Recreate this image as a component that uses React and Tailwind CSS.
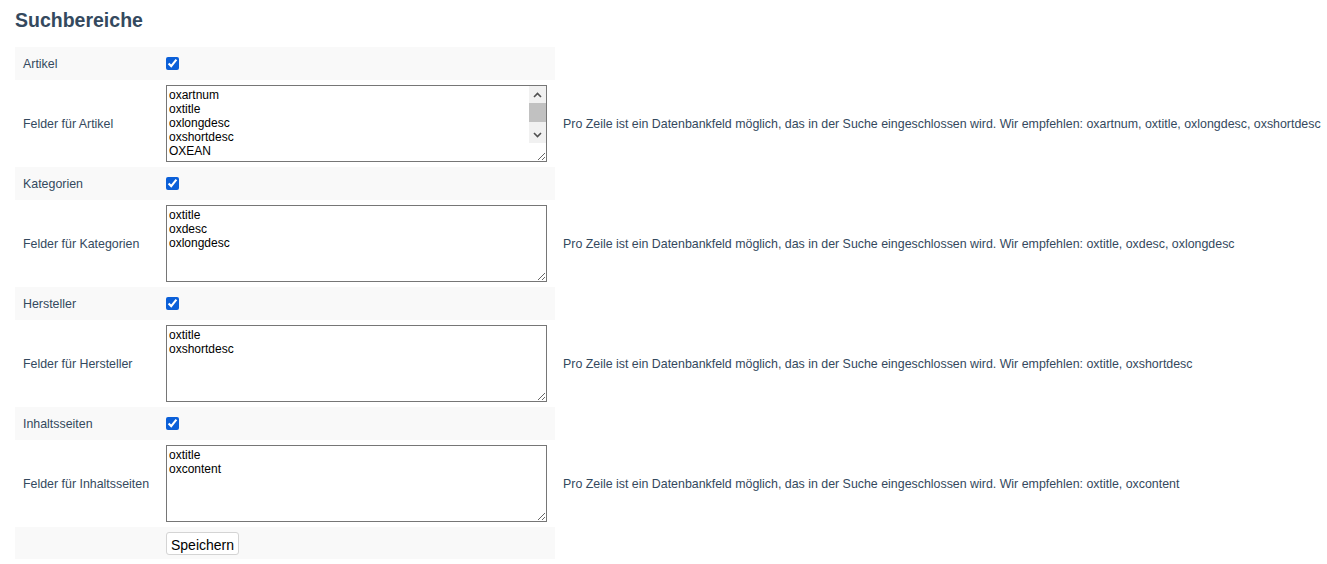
import React from "react";

const rows = [
    {
        label: "Artikel",
        fieldLabel: "Felder für Artikel",
        value: "oxartnum\noxtitle\noxlongdesc\noxshortdesc\nOXEAN",
        hint: "oxartnum, oxtitle, oxlongdesc, oxshortdesc",
        scroll: true,
    },
    {
        label: "Kategorien",
        fieldLabel: "Felder für Kategorien",
        value: "oxtitle\noxdesc\noxlongdesc",
        hint: "oxtitle, oxdesc, oxlongdesc",
    },
    {
        label: "Hersteller",
        fieldLabel: "Felder für Hersteller",
        value: "oxtitle\noxshortdesc",
        hint: "oxtitle, oxshortdesc",
    },
    {
        label: "Inhaltsseiten",
        fieldLabel: "Felder für Inhaltsseiten",
        value: "oxtitle\noxcontent",
        hint: "oxtitle, oxcontent",
    },
];

// fake scrollbar, the headless browser hides the native one
const ScrollBar = () => (
    <div className="pointer-events-none absolute right-[1px] top-[1px] flex h-[57px] w-[17px] flex-col bg-[#f1f1f1]">
        <div className="flex h-[17px] items-center justify-center">
            <svg width="9" height="6" viewBox="0 0 9 6">
                <polyline points="1,5 4.5,1.5 8,5" fill="none" stroke="#505050" strokeWidth="1.6" />
            </svg>
        </div>
        <div className="h-[19px] bg-[#c1c1c1]" />
        <div className="flex-1" />
        <div className="flex h-[17px] items-center justify-center">
            <svg width="9" height="6" viewBox="0 0 9 6">
                <polyline points="1,1 4.5,4.5 8,1" fill="none" stroke="#505050" strokeWidth="1.6" />
            </svg>
        </div>
    </div>
);

const App = () => {
    return (
        <div className="min-h-[564px] bg-white px-[15px] pt-[9px] font-['Liberation_Sans',Arial,sans-serif] text-[#34495e]">
            <h1 className="text-[19.5px] font-bold leading-[22px] text-[#34495e]">Suchbereiche</h1>
            <div className="mt-[16px] grid grid-cols-[143px_397px_1fr] text-[12.4px]">
                {rows.map((row) => (
                    <React.Fragment key={row.label}>
                        {/* checkbox row */}
                        <div className="flex h-[33px] items-center bg-[#f9f9f9] pl-2 pt-[1px]">{row.label}</div>
                        <div className="flex h-[33px] items-center bg-[#f9f9f9] pl-2">
                            <input type="checkbox" defaultChecked className="m-0 h-[13px] w-[13px] accent-[#0b5fd8]" />
                        </div>
                        <div />

                        {/* fields row */}
                        <div className="flex h-[87px] items-center pl-2 pt-[1px]">{row.fieldLabel}</div>
                        <div className="flex h-[87px] items-center px-2">
                            <div className="relative">
                                <textarea
                                    defaultValue={row.value}
                                    className="m-0 block h-[77px] w-[381px] overflow-hidden border border-[#767676] bg-white px-[2px] pt-[2px] font-['Liberation_Sans',Arial,sans-serif] text-[12px] leading-[14px] text-black outline-none"
                                />
                                {row.scroll && <ScrollBar />}
                            </div>
                        </div>
                        <div className="flex h-[87px] items-center whitespace-nowrap pl-2 pt-[1px]">
                            Pro Zeile ist ein Datenbankfeld möglich, das in der Suche eingeschlossen wird. Wir empfehlen: {row.hint}
                        </div>
                    </React.Fragment>
                ))}
                <div className="h-[32px] bg-[#f9f9f9]" />
                <div className="flex h-[32px] items-end bg-[#f9f9f9] pl-2 pb-[4px]">
                    <button
                        type="button"
                        className="h-[23px] rounded-[3px] border border-[#d4d4d4] bg-white px-[4px] pt-[2px] font-['Liberation_Sans',Arial,sans-serif] text-[14px] text-black"
                    >
                        Speichern
                    </button>
                </div>
                <div />
            </div>
        </div>
    );
};

export default App;
